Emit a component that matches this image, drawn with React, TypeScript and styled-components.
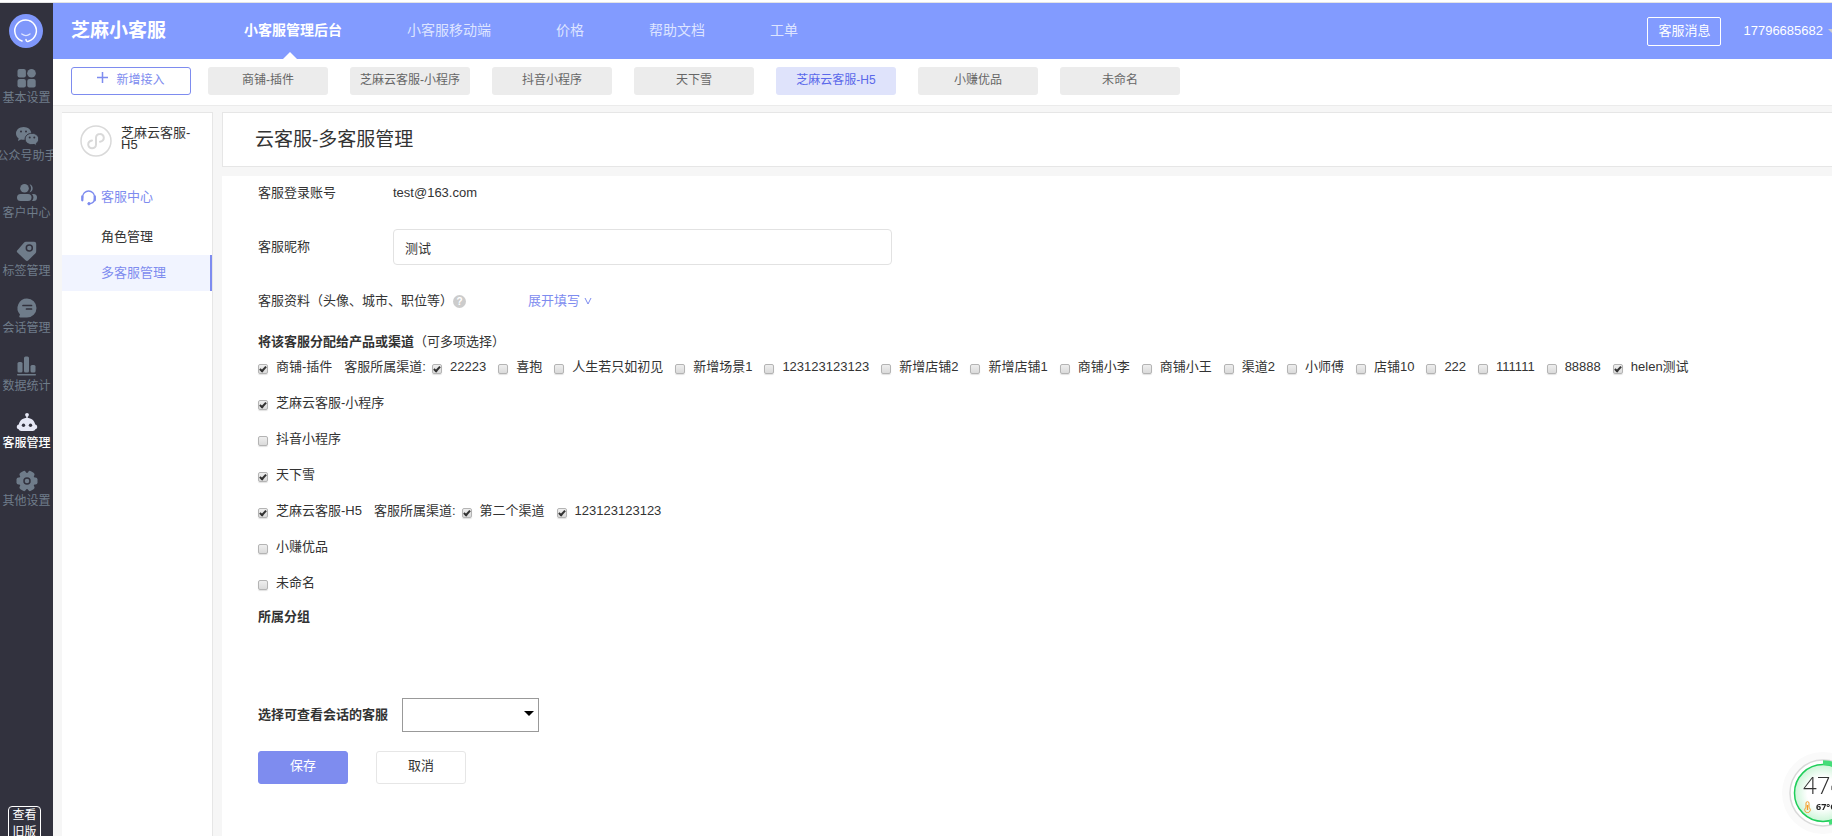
import React from 'react';
import styled, { createGlobalStyle, css } from 'styled-components';

const GlobalStyle = createGlobalStyle`
  *, *::before, *::after { box-sizing: border-box; }
  body {
    margin: 0;
    background: #fff;
    color: #333;
    font: 13px/18px "Liberation Sans", "Noto Sans CJK SC", sans-serif;
  }
  button, input, select { font: inherit; color: inherit; }
  a { color: inherit; text-decoration: none; }
  h1, ul, p { margin: 0; padding: 0; }
  ul { list-style: none; }
`;

/* ---------- page frame ---------- */

const Page = styled.div`
  height: 100vh;
  display: flex;
  flex-direction: column;
  overflow: hidden;
`;

const TopEdge = styled.div`
  flex: none;
  height: 3px;
  border-bottom: 1px solid #e4e4e4;
`;

const Frame = styled.div`
  flex: 1;
  min-height: 0;
  display: flex;
`;

const Content = styled.div`
  flex: 1;
  min-width: 0;
  display: flex;
  flex-direction: column;
`;

/* ---------- dark rail ---------- */

const Rail = styled.nav`
  flex: none;
  width: 53px;
  display: flex;
  flex-direction: column;
  overflow: hidden;
  background: #32323e;
`;

const RailLogo = styled.a`
  display: block;
  width: 34px;
  height: 34px;
  margin: 11px 0 18px 9px;
`;

const RailList = styled.ul`
  width: 100%;
  height: 460px;
  display: flex;
  flex-direction: column;
`;

const RailItem = styled.li`
  flex: 1;
`;

const RailLink = styled.a<{ $active?: boolean }>`
  display: flex;
  flex-direction: column;
  align-items: center;
  font-size: 12px;
  line-height: 16px;
  white-space: nowrap;
  color: ${(p) => (p.$active ? '#fff' : '#6f7c8a')};
  font-weight: ${(p) => (p.$active ? 500 : 400)};

  svg {
    display: block;
    width: 24px;
    height: 24px;
    color: ${(p) => (p.$active ? '#e6e8f5' : '#6f7c8a')};
  }
`;

const OldVersion = styled.button`
  flex: none;
  width: 33px;
  height: 36px;
  margin: auto 0 -6px 8px;
  padding: 0 3px;
  border: 1px solid #fff;
  border-radius: 4px;
  background: none;
  color: #fff;
  font-size: 12px;
  line-height: 17px;
`;

/* ---------- header ---------- */

const Header = styled.header`
  flex: none;
  height: 56px;
  display: flex;
  align-items: center;
  padding-left: 18px;
  overflow: hidden;
  background: #829bff;
  color: #fff;
`;

const Brand = styled.a`
  width: 173px;
  font-size: 19px;
  line-height: 28px;
  font-weight: 700;
`;

const TopNav = styled.nav`
  display: flex;
  gap: 65px;
  height: 100%;
`;

const TopLink = styled.a<{ $active?: boolean }>`
  position: relative;
  font-size: 14px;
  line-height: 54px;
  white-space: nowrap;
  color: ${(p) => (p.$active ? '#fff' : '#dde4ff')};
  font-weight: ${(p) => (p.$active ? 700 : 400)};

  ${(p) =>
    p.$active &&
    css`
      &::after {
        content: '';
        position: absolute;
        left: 50%;
        bottom: 0;
        margin-left: -10px;
        border: 7px solid transparent;
        border-top: 0;
        border-bottom-color: #fff;
      }
    `}
`;

const Account = styled.div`
  flex: none;
  display: flex;
  align-items: center;
  gap: 22px;
  margin: 0 -6px 0 auto;
`;

const MessageButton = styled.button`
  width: 74px;
  height: 29px;
  padding: 0;
  border: 1px solid #fff;
  border-radius: 2px;
  background: none;
`;

const AccountMenu = styled.button`
  display: flex;
  align-items: center;
  gap: 5px;
  padding: 0;
  border: 0;
  background: none;

  &::after {
    content: '';
    border: 5px solid transparent;
    border-top-color: #ccc;
    border-bottom: 0;
  }
`;

/* ---------- product tabs ---------- */

const TabBar = styled.div`
  flex: none;
  height: 47px;
  display: flex;
  gap: 22px;
  padding: 8px 0 0 18px;
  border-bottom: 1px solid #ebebeb;
  background: #fff;
`;

const Tab = styled.button<{ $kind?: 'add' | 'active' }>`
  flex: none;
  width: 120px;
  height: 28px;
  padding: 0 0 2px;
  border: 0;
  border-radius: 3px;
  background: #ececec;
  color: #666;
  font-size: 12px;
  line-height: 24px;

  ${(p) =>
    p.$kind === 'active' &&
    css`
      background: #dfe3fb;
      color: #5a68ea;
    `}
  ${(p) =>
    p.$kind === 'add' &&
    css`
      display: flex;
      justify-content: center;
      gap: 8px;
      margin-right: -5px;
      border: 1px solid #7e8cef;
      background: #fff;
      color: #7e8cef;

      svg {
        width: 11px;
        height: 20px;
      }
    `}
`;

/* ---------- body ---------- */

const Body = styled.div`
  flex: 1;
  min-height: 0;
  display: flex;
  gap: 9px;
  padding: 6px 0 0 9px;
  background: #f6f6f6;
`;

const SubMenu = styled.aside`
  flex: none;
  width: 151px;
  border: solid #e6e6e6;
  border-width: 1px 1px 0 0;
  background: #fff;
`;

const Product = styled.div`
  display: flex;
  gap: 9px;
  padding: 12px 8px 0 18px;
  height: 62px;
  line-height: 12px;

  svg {
    flex: none;
    width: 32px;
    height: 32px;
  }
  span {
    padding-top: 2px;
  }
`;

const SubGroup = styled.div`
  display: flex;
  align-items: center;
  gap: 4px;
  height: 44px;
  padding-left: 18px;
  color: #7e8cef;

  svg {
    width: 17px;
    height: 17px;
  }
`;

const SubLink = styled.a<{ $active?: boolean }>`
  display: block;
  padding-left: 39px;
  line-height: 36px;
  ${(p) =>
    p.$active &&
    css`
      background: #f1f4ff;
      color: #7e8cef;
      border-right: 2px solid #7e8cef;
    `}
`;

const Main = styled.main`
  flex: 1;
  min-width: 0;
  display: flex;
  flex-direction: column;
`;

const TitleCard = styled.div`
  flex: none;
  padding: 12px 32px;
  margin-bottom: 9px;
  border: 1px solid #e6e6e6;
  border-right: 0;
  background: #fff;

  h1 {
    font-size: 19px;
    line-height: 29px;
    font-weight: 400;
  }
`;

const Form = styled.form`
  flex: 1;
  min-height: 0;
  padding-left: 36px;
  background: #fff;
`;

const Field = styled.div`
  display: flex;
  align-items: center;
  height: 34px;
  margin-bottom: 20px;
`;

const FieldName = styled.label`
  width: 135px;
`;

const TextInput = styled.input`
  width: 499px;
  height: 36px;
  padding: 0 11px;
  border: 1px solid #e2e2e2;
  border-radius: 4px;
  background: #fff;
`;

const Details = styled(Field)`
  margin-bottom: 17px;
`;

const Help = styled.button`
  width: 13px;
  height: 13px;
  padding: 0;
  border: 0;
  border-radius: 50%;
  background: #ccc;
  color: #fff;
  font-size: 10px;
  line-height: 13px;
  font-weight: 700;
`;

const Expand = styled.button`
  display: flex;
  align-items: center;
  gap: 4px;
  margin-left: 62px;
  padding: 0;
  border: 0;
  background: none;
  color: #7e8cef;

  svg {
    width: 8px;
    height: 8px;
  }
`;

const Heading = styled.p`
  line-height: 14px;
`;

const ProductRow = styled.li`
  display: flex;
  align-items: center;
  gap: 12px;
  height: 36px;
  white-space: nowrap;
`;

const Channels = styled.div`
  display: flex;
  align-items: center;
  gap: 6px;
`;

const ChannelList = styled.ul`
  display: flex;
  gap: 12px;
`;

const Choice = styled.label`
  display: flex;
  align-items: center;
  gap: 8px;
`;

const CheckBox = styled.input`
  appearance: none;
  position: relative;
  width: 10px;
  height: 10px;
  margin: 3px 0 0;
  border: 1px solid #b4b4b4;
  border-radius: 2px;
  background: linear-gradient(#eee, #dadada);
  box-shadow: 0 1px 1px rgba(0, 0, 0, 0.12);

  &:checked::after {
    content: '';
    position: absolute;
    left: 2px;
    top: 0;
    width: 4px;
    height: 7px;
    border: solid #333;
    border-width: 0 2px 2px 0;
    transform: rotate(42deg);
  }
`;

const GroupTitle = styled.p`
  height: 97px;
  line-height: 32px;
  font-weight: 700;
`;

const Viewer = styled.div`
  display: flex;
  align-items: center;
  gap: 14px;
  margin-bottom: 19px;

  label {
    font-weight: 700;
  }
`;

const SelectBox = styled.div`
  position: relative;

  &::after {
    content: '';
    position: absolute;
    right: 5px;
    top: 13px;
    border: 5px solid transparent;
    border-top-color: #000;
    border-bottom: 0;
    pointer-events: none;
  }
`;

const Select = styled.select`
  display: block;
  appearance: none;
  width: 137px;
  height: 34px;
  border: 1px solid #999;
  border-radius: 0;
  background: #fff;
`;

const Actions = styled.div`
  display: flex;
  gap: 28px;
`;

const Action = styled.button<{ $primary?: boolean }>`
  width: 90px;
  height: 33px;
  padding: 0 0 3px;
  border: 1px solid ${(p) => (p.$primary ? '#7e8cef' : '#e6e6e6')};
  border-radius: 3px;
  background: ${(p) => (p.$primary ? '#7e8cef' : '#fff')};
  color: ${(p) => (p.$primary ? '#fff' : '#333')};
`;

/* ---------- floating system monitor ---------- */

const Monitor = styled.div`
  position: fixed;
  right: -33px;
  bottom: 1px;
  width: 84px;
  height: 84px;
  white-space: nowrap;
  overflow: hidden;

  > svg {
    position: absolute;
    inset: 0;
    width: 84px;
    height: 84px;
  }
`;

const MonitorText = styled.div`
  position: relative;
  padding: 23px 0 0 22px;
`;

const Load = styled.div`
  font: 300 24px/22px "Open Sans", sans-serif;
  color: #333;

  small {
    font-size: 13px;
  }
`;

const Temperature = styled.div`
  display: flex;
  align-items: center;
  gap: 4px;
  font: 700 9px/14px "Open Sans", sans-serif;
  color: #222;

  svg {
    width: 9px;
    height: 12px;
  }
`;

/* ---------- icons ---------- */

const LogoIcon = () => (
  <svg viewBox="0 0 34 34" fill="none" strokeLinecap="round">
    <circle cx="17" cy="17" r="17" fill="#7f97fb" />
    <path d="M13 27 A10.8 10.8 0 1 1 19.5 27.2 Q17 28 17 25.6" stroke="#fff" strokeWidth="1.5" />
    <path d="M12.8 20 Q17 23.2 21 20" stroke="#dfe5ff" strokeWidth="1.3" />
  </svg>
);

const railIcons: Record<string, React.ReactNode> = {
  grid: (
    <g fill="currentColor">
      <rect x="2.500" y="3" width="8.4" height="8.4" rx="2" />
      <circle cx="16.500" cy="7.2" r="4.3" />
      <rect x="2.500" y="13" width="8.4" height="8.4" rx="2" />
      <rect x="12.3" y="13" width="8.4" height="8.4" rx="2" />
    </g>
  ),
  wechat: (
    <>
      <path d="M8.6 3C4.300 3 1 5.800 1 9.400c0 2 1 3.700 2.600 4.900L3 17l3-1.500c.9.200 1.700.3 2.600.3 4.300 0 7.700-2.800 7.700-6.400S12.900 3 8.600 3z" fill="currentColor" />
      <path d="M17 9.300c-4 0-6.900 2.500-6.900 5.700S13 20.700 17 20.700c.8 0 1.500-.1 2.200-.3l2.700 1.300-.6-2.300c1.500-1 2.400-2.600 2.400-4.400 0-3.200-2.900-5.700-6.700-5.700z" fill="currentColor" stroke="#32323e" strokeWidth="1" />
      <g fill="#32323e">
        <circle cx="6" cy="7.600" r="1" /><circle cx="11" cy="7.600" r="1" />
        <circle cx="14.700" cy="13.500" r="1" /><circle cx="19.300" cy="13.500" r="1" />
      </g>
    </>
  ),
  users: (
    <g fill="currentColor">
      <circle cx="9.500" cy="7.300" r="4.300" />
      <path d="M14.500 3.200a4.300 4.300 0 0 1 0 8.300 6.200 6.200 0 0 0 0-8.300z" />
      <rect x="2" y="13" width="14.500" height="7" rx="3.500" />
      <path d="M17 13h1.500a3.500 3.500 0 0 1 0 7H17a5.500 5.500 0 0 0 0-7z" />
    </g>
  ),
  tag: (
    <>
      <path d="M11 2.700h8.200a2 2 0 0 1 2 2v7.600a3 3 0 0 1-.9 2.100l-6.900 6.900a2 2 0 0 1-2.900 0l-8.100-7.800a1.500 1.500 0 0 1 0-2.200l6.500-7.600a3 3 0 0 1 2.100-1z" fill="currentColor" />
      <circle cx="14.300" cy="9" r="3" fill="none" stroke="#32323e" strokeWidth="1.500" />
    </>
  ),
  chat: (
    <>
      <path d="M12 2.500a9.500 9.500 0 1 1 0 19H5.200a1 1 0 0 1-.8-1.500l.6-1.600A9.500 9.500 0 0 1 12 2.500z" fill="currentColor" />
      <path d="M8 9.500h8.500M11.500 13h5" stroke="#32323e" strokeWidth="1.700" strokeLinecap="round" />
    </>
  ),
  bars: (
    <g fill="currentColor">
      <rect x="2.500" y="8" width="5" height="10.500" rx="1.500" />
      <rect x="9" y="2.500" width="5" height="16" rx="1.500" />
      <rect x="15.500" y="11" width="5" height="7.500" rx="1.500" />
      <rect x="2" y="20" width="19" height="1.500" rx=".7" />
    </g>
  ),
  robot: (
    <>
      <path d="M12 8V4" stroke="currentColor" strokeWidth="1.500" />
      <circle cx="12" cy="3.800" r="1.900" fill="currentColor" />
      <path d="M12 7c4.500 0 7.600 2.700 8.200 6.500 1.200.3 2 1.200 2 2.500s-.8 2.100-1.900 2.300c-.4 1.300-1.300 1.700-2.500 1.700H6.200c-1.200 0-2.100-.4-2.500-1.700-1.100-.2-1.900-1-1.900-2.300s.8-2.200 2-2.500C4.400 9.700 7.500 7 12 7z" fill="currentColor" />
      <circle cx="8.500" cy="14.300" r="1.700" fill="#32323e" />
      <circle cx="15.500" cy="14.300" r="1.700" fill="#32323e" />
    </>
  ),
  gear: (
    <>
      <g fill="currentColor">
        <circle cx="12" cy="12" r="8.200" />
        {[0, 60, 120].map((a) => (
          <rect key={a} x="1.500" y="8.500" width="21" height="7" rx="2" transform={`rotate(${a} 12 12)`} />
        ))}
      </g>
      <circle cx="12" cy="12" r="3" fill="none" stroke="#32323e" strokeWidth="1.500" />
    </>
  ),
};

const RailIcon = ({ name }: { name: string }) => <svg viewBox="0 0 24 24" fill="none">{railIcons[name]}</svg>;

const MiniProgramIcon = () => (
  <svg viewBox="0 0 32 32" fill="none" stroke="#d9d9d9" strokeLinecap="round">
    <circle cx="16" cy="16" r="15" strokeWidth="1.500" />
    <path d="M12 15.500c-2.300.4-3.800 2-3.800 4a3.800 3.800 0 0 0 3.900 3.800c2.200 0 3.900-1.600 3.900-3.800v-6.700c0-2.200 1.700-3.900 3.900-3.900a3.800 3.800 0 0 1 3.900 3.800c0 2-1.500 3.600-3.800 4" strokeWidth="2" />
  </svg>
);

const HeadsetIcon = () => (
  <svg viewBox="0 0 17 17" fill="none" stroke="#7e8cef" strokeLinecap="round">
    <path d="M2.600 9V8a6 6 0 0 1 12 0v1c0 3-2 5.400-5 5.700" strokeWidth="1.300" />
    <path d="M2.300 7.500v3.800M14.800 7.500v3.800" strokeWidth="2.300" />
    <circle cx="9" cy="14.700" r="1.200" fill="#7e8cef" />
  </svg>
);

const MonitorRing = () => (
  <svg viewBox="0 0 84 84" fill="none">
    <defs>
      <radialGradient id="ring-fill">
        <stop offset="55%" stopColor="#fff" />
        <stop offset="100%" stopColor="#cdf5d8" />
      </radialGradient>
    </defs>
    <circle cx="42" cy="42" r="41" fill="#fafafa" />
    <circle cx="42" cy="42" r="33" fill="#fff" stroke="#d9d9d9" strokeWidth="1.500" />
    <circle cx="42" cy="42" r="28.500" fill="url(#ring-fill)" stroke="#1fce5a" strokeWidth="1.500" />
    <path d="M42 11.500a30.500 30.500 0 0 1 6 60.400" stroke="#45dd78" strokeWidth="4.500" />
  </svg>
);

const ThermometerIcon = () => (
  <svg viewBox="0 0 9 12" fill="none" stroke="#f59a23">
    <path d="M3 6.500V2.200a1.500 1.500 0 0 1 3 0v4.300a2.800 2.800 0 1 1-3 0z" />
    <path d="M4.500 4v5" strokeWidth="1.400" />
  </svg>
);

/* ---------- data ---------- */

const railItems = [
  ['grid', '基本设置'],
  ['wechat', '公众号助手'],
  ['users', '客户中心'],
  ['tag', '标签管理'],
  ['chat', '会话管理'],
  ['bars', '数据统计'],
  ['robot', '客服管理'],
  ['gear', '其他设置'],
];

const topLinks = ['小客服管理后台', '小客服移动端', '价格', '帮助文档', '工单'];

const tabs = ['商铺-插件', '芝麻云客服-小程序', '抖音小程序', '天下雪', '芝麻云客服-H5', '小赚优品', '未命名'];

type Option = { name: string; on?: boolean };

const products: (Option & { channels?: Option[] })[] = [
  {
    name: '商铺-插件',
    on: true,
    channels: [
      { name: '22223', on: true },
      { name: '喜抱' },
      { name: '人生若只如初见' },
      { name: '新增场景1' },
      { name: '123123123123' },
      { name: '新增店铺2' },
      { name: '新增店铺1' },
      { name: '商铺小李' },
      { name: '商铺小王' },
      { name: '渠道2' },
      { name: '小师傅' },
      { name: '店铺10' },
      { name: '222' },
      { name: '111111' },
      { name: '88888' },
      { name: 'helen测试', on: true },
    ],
  },
  { name: '芝麻云客服-小程序', on: true },
  { name: '抖音小程序' },
  { name: '天下雪', on: true },
  {
    name: '芝麻云客服-H5',
    on: true,
    channels: [
      { name: '第二个渠道', on: true },
      { name: '123123123123', on: true },
    ],
  },
  { name: '小赚优品' },
  { name: '未命名' },
];

const Check = ({ name, on }: Option) => (
  <Choice>
    <CheckBox type="checkbox" defaultChecked={on} />
    {name}
  </Choice>
);

export default function App() {
  return (
    <Page>
      <GlobalStyle />
      <TopEdge />
      <Frame>
        <Rail>
          <RailLogo href="#" aria-label="首页"><LogoIcon /></RailLogo>
          <RailList>
            {railItems.map(([icon, label]) => (
              <RailItem key={label}>
                <RailLink href="#" $active={label === '客服管理'}>
                  <RailIcon name={icon} />
                  {label}
                </RailLink>
              </RailItem>
            ))}
          </RailList>
          <OldVersion type="button">查看旧版</OldVersion>
        </Rail>

        <Content>
          <Header>
            <Brand href="#">芝麻小客服</Brand>
            <TopNav>
              {topLinks.map((label, i) => (
                <TopLink key={label} href="#" $active={i === 0}>{label}</TopLink>
              ))}
            </TopNav>
            <Account>
              <MessageButton type="button">客服消息</MessageButton>
              <AccountMenu type="button">17796685682</AccountMenu>
            </Account>
          </Header>

          <TabBar>
            <Tab type="button" $kind="add">
              <svg viewBox="0 0 11 20" stroke="currentColor" strokeWidth="1.500"><path d="M0 9.500h11M5.500 4v11" /></svg>
              新增接入
            </Tab>
            {tabs.map((label) => (
              <Tab key={label} type="button" $kind={label === '芝麻云客服-H5' ? 'active' : undefined}>{label}</Tab>
            ))}
          </TabBar>

          <Body>
            <SubMenu>
              <Product>
                <MiniProgramIcon />
                <span>芝麻云客服-H5</span>
              </Product>
              <SubGroup><HeadsetIcon />客服中心</SubGroup>
              <SubLink href="#">角色管理</SubLink>
              <SubLink href="#" $active>多客服管理</SubLink>
            </SubMenu>

            <Main>
              <TitleCard><h1>云客服-多客服管理</h1></TitleCard>
              <Form onSubmit={(e) => e.preventDefault()}>
                <Field>
                  <FieldName as="span">客服登录账号</FieldName>
                  <span>test@163.com</span>
                </Field>
                <Field>
                  <FieldName htmlFor="nickname">客服昵称</FieldName>
                  <TextInput id="nickname" type="text" defaultValue="测试" />
                </Field>
                <Details>
                  <span>客服资料（头像、城市、职位等）</span>
                  <Help type="button">?</Help>
                  <Expand type="button">
                    展开填写
                    <svg viewBox="0 0 8 8" fill="none" stroke="currentColor"><path d="M1 1l3 6 3-6" /></svg>
                  </Expand>
                </Details>

                <Heading><b>将该客服分配给产品或渠道</b>（可多项选择）</Heading>
                <ul>
                  {products.map(({ name, on, channels }) => (
                    <ProductRow key={name}>
                      <Check name={name} on={on} />
                      {channels && (
                        <Channels>
                          客服所属渠道:
                          <ChannelList>
                            {channels.map((c) => (
                              <li key={c.name}><Check {...c} /></li>
                            ))}
                          </ChannelList>
                        </Channels>
                      )}
                    </ProductRow>
                  ))}
                </ul>

                <GroupTitle>所属分组</GroupTitle>
                <Viewer>
                  <label htmlFor="viewer">选择可查看会话的客服</label>
                  <SelectBox>
                    <Select id="viewer" />
                  </SelectBox>
                </Viewer>
                <Actions>
                  <Action type="submit" $primary>保存</Action>
                  <Action type="button">取消</Action>
                </Actions>
              </Form>
            </Main>
          </Body>
        </Content>
      </Frame>

      <Monitor>
        <MonitorRing />
        <MonitorText>
          <Load>47<small>%</small></Load>
          <Temperature><ThermometerIcon />67°C</Temperature>
        </MonitorText>
      </Monitor>
    </Page>
  );
}
